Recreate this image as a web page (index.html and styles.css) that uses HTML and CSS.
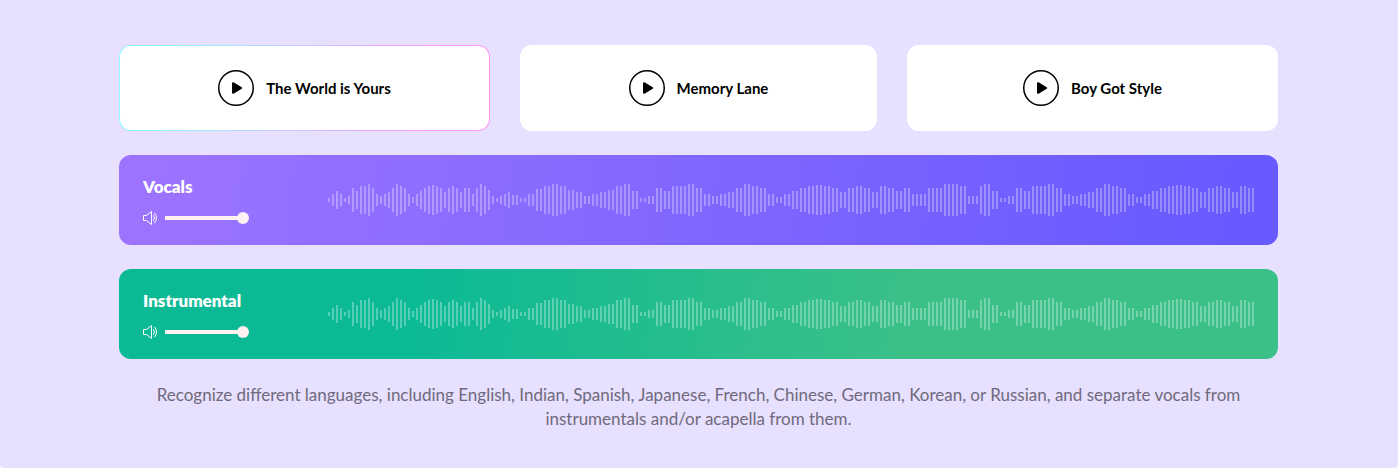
FILE: index.html
```html
<!DOCTYPE html>
<html lang="en">
<head>
<meta charset="utf-8">
<title>Vocal separation demo</title>
<link rel="stylesheet" href="styles.css">
</head>
<body>
<main class="demo">
  <svg class="defs" aria-hidden="true">
    <symbol id="play" viewBox="0 0 36 36">
      <circle cx="18" cy="18" r="17.25" fill="none" stroke="currentColor" stroke-width="1.5"/>
      <path d="M15 13.2v9.6L23.2 18Z" fill="currentColor" stroke="currentColor" stroke-width="2" stroke-linejoin="round"/>
    </symbol>
    <symbol id="volume" viewBox="0 0 14 14">
      <path d="M.5 4.5h3l5-4v13l-5-4h-3zM10.3 4.2q2.4 2.8 0 5.6M11.4 1.8q4.2 5.2 0 10.4" fill="none" stroke="currentColor"/>
    </symbol>
  </svg>

  <div class="songs">
    <button class="song song-active" type="button"><svg class="play"><use href="#play"/></svg>The World is Yours</button>
    <button class="song" type="button"><svg class="play"><use href="#play"/></svg>Memory Lane</button>
    <button class="song" type="button"><svg class="play"><use href="#play"/></svg>Boy Got Style</button>
  </div>

  <section class="track track-vocals">
    <div class="controls">
      <label class="name" for="vocals">Vocals</label>
      <div class="volume">
        <svg class="speaker"><use href="#volume"/></svg>
        <input class="slider" id="vocals" type="range" min="0" max="100" value="100">
      </div>
    </div>
    <svg class="wave" viewBox="0 0 926 32" preserveAspectRatio="none"><path/></svg>
  </section>

  <section class="track track-instrumental">
    <div class="controls">
      <label class="name" for="instrumental">Instrumental</label>
      <div class="volume">
        <svg class="speaker"><use href="#volume"/></svg>
        <input class="slider" id="instrumental" type="range" min="0" max="100" value="100">
      </div>
    </div>
    <svg class="wave" viewBox="0 0 926 32" preserveAspectRatio="none"><path/></svg>
  </section>

  <p class="note">Recognize different languages, including English, Indian, Spanish, Japanese, French, Chinese, German, Korean, or Russian, and separate vocals from instrumentals and/or acapella from them.</p>
</main>
<script src="wave.js"></script>
</body>
</html>
```
FILE: styles.css
```css
* {
  box-sizing: border-box;
}

body {
  margin: 0;
  background: #fff;
  font-family: Lato, "Liberation Sans", sans-serif;
}

.defs {
  display: none;
}

.demo {
  display: flex;
  flex-direction: column;
  gap: 24px;
  padding: 45px 120px 37px 119px;
  border-radius: 0 0 4px 4px;
  background: #e7e0ff;
}

.songs {
  display: grid;
  grid-template-columns: 371fr 357fr 371fr;
  gap: 30px;
}

.song {
  display: flex;
  align-items: center;
  justify-content: center;
  gap: 12px;
  padding: 24px;
  border: 1px solid transparent;
  border-radius: 12px;
  background: #fff;
  color: #000;
  font: bold 15px/24px Lato, "Liberation Sans", sans-serif;
}

.song-active {
  background:
    linear-gradient(#fff, #fff) padding-box,
    linear-gradient(100deg, #8ffaff 12%, #ff94f8 84%) border-box;
}

.play {
  width: 36px;
  height: 36px;
}

.track {
  display: grid;
  grid-template-columns: 185px 1fr;
  align-items: center;
  padding: 20px 24px;
  border-radius: 12px;
  color: #fff;
}

.track-vocals {
  background: linear-gradient(97deg, #9b73ff 4%, #675aff 95%);
}

.track-instrumental {
  background: linear-gradient(97deg, #0bba95 25%, #3bc087 68%);
}

.controls {
  display: flex;
  flex-direction: column;
  gap: 12px;
}

.name {
  font-size: 17px;
  font-weight: 800;
  line-height: 24px;
}

.volume {
  display: flex;
  align-items: center;
  gap: 8px;
}

.speaker {
  width: 14px;
  height: 14px;
}

.slider {
  width: 84px;
  height: 12px;
  margin: 0;
  appearance: none;
  background: none;
}

.slider::-webkit-slider-runnable-track {
  height: 4px;
  background: linear-gradient(#fff0f1, #fff0f1) left / calc(100% - 4px) no-repeat;
}

.slider::-webkit-slider-thumb {
  width: 12px;
  height: 12px;
  margin-top: -4px;
  appearance: none;
  border-radius: 50%;
  background: #fff0f1;
}

.wave {
  width: 100%;
  height: 32px;
  fill: #fff;
  fill-opacity: .3;
}

.note {
  margin: 0;
  color: #6f6a7c;
  font-size: 17px;
  line-height: 24px;
  text-align: center;
}
```
FILE: wave.js
```js
// Bar heights, left to right; each bar is 2 wide on a pitch of 4.
const heights = [
  4, 12, 18, 12, 4, 8, 24, 18, 28, 28, 32, 24, 12, 8, 12, 16, 24, 32, 28, 24,
  12, 6, 12, 18, 24, 28, 30, 28, 24, 16, 24, 28, 24, 16, 24, 24, 12, 24, 32, 28,
  20, 8, 4, 8, 12, 16, 10, 10, 4, 4, 12, 12, 22, 22, 28, 28, 32, 32, 28, 28,
  20, 20, 16, 16, 8, 8, 12, 12, 16, 16, 20, 20, 28, 28, 32, 32, 18, 18, 4, 4,
  8, 8, 24, 24, 18, 18, 28, 28, 28, 28, 32, 32, 24, 24, 12, 12, 8, 8, 12, 12,
  16, 16, 24, 24, 32, 32, 28, 28, 24, 24, 12, 12, 6, 6, 12, 12, 18, 18, 24, 24,
  28, 28, 30, 30, 28, 28, 24, 24, 16, 16, 24, 24, 28, 28, 24, 24, 16, 16, 28, 28,
  24, 24, 18, 18, 24, 24, 12, 12, 12, 12, 24, 24, 24, 24, 32, 32, 32, 32, 28, 28,
  8, 8, 8, 28, 32, 32, 18, 18, 4, 4, 8, 8, 24, 24, 18, 18, 28, 28, 28, 28,
  32, 32, 24, 24, 12, 12, 8, 8, 12, 12, 16, 16, 24, 24, 32, 32, 28, 28, 24, 24,
  12, 12, 6, 6, 12, 12, 18, 18, 24, 24, 28, 28, 30, 30, 28, 28, 24, 24, 16, 16,
  24, 24, 28, 28, 24, 24, 16, 16, 28, 28, 24, 24
];

const bars = heights
  .map((h, i) => `M${i * 4} ${16 - h / 2}h2v${h}h-2z`)
  .join("");

for (const path of document.querySelectorAll(".wave path")) {
  path.setAttribute("d", bars);
}
```
